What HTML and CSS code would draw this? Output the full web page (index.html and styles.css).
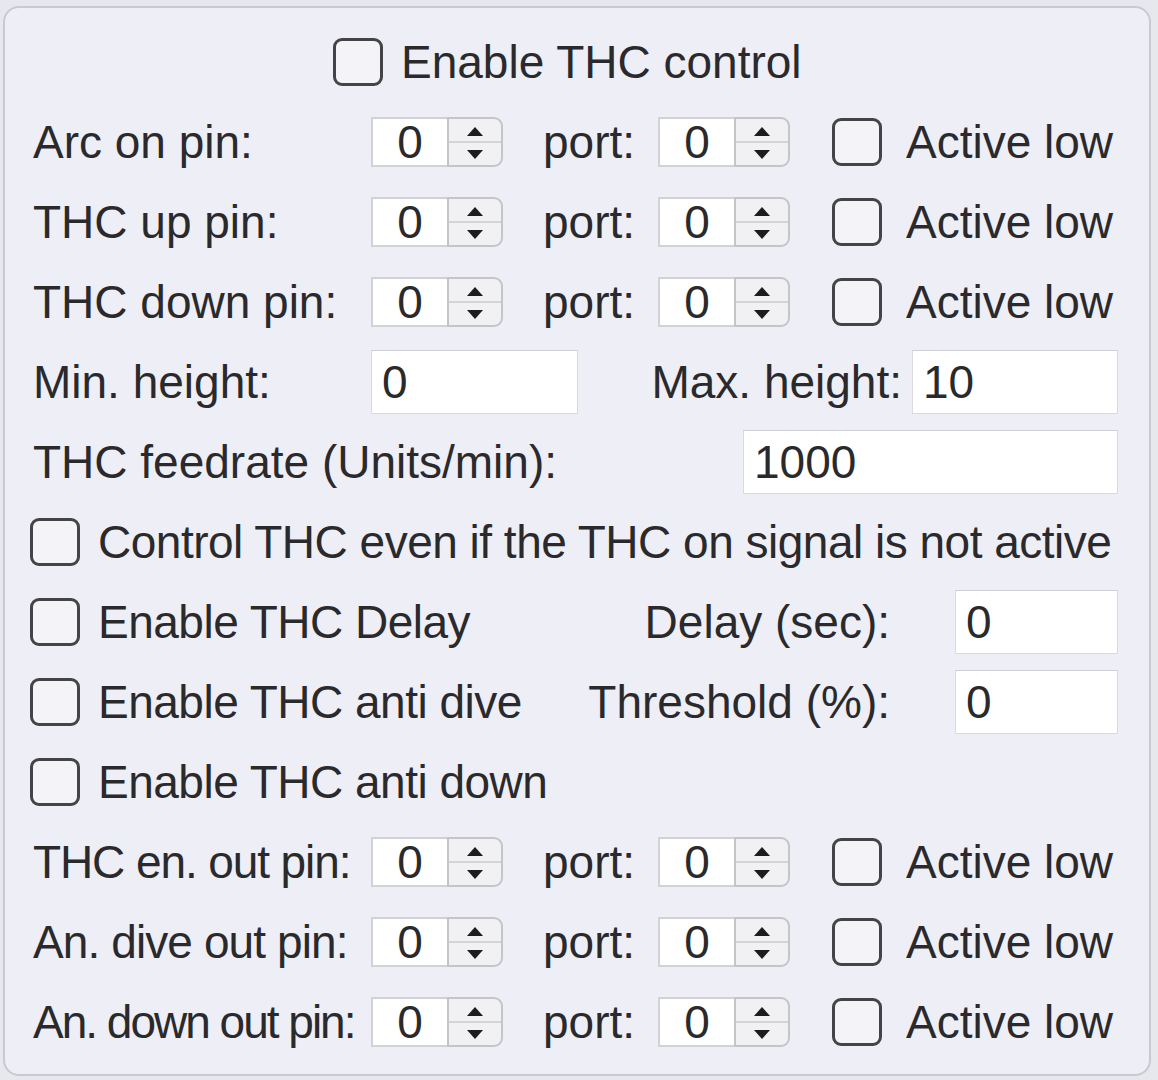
FILE: index.html
```
<!DOCTYPE html>
<html>
<head>
<meta charset="utf-8">
<link rel="stylesheet" href="styles.css">
</head>
<body>
<div class="frame">
  <div class="row top">
    <label class="check gap-top"><span class="box"></span><span>Enable THC control</span></label>
  </div>

  <div class="row pinrow">
    <span class="lbl">Arc on pin:</span>
    <div class="spin"><span class="spin-val">0</span><span class="spin-btns"><span class="half"><i class="up"></i></span><span class="half"><i class="down"></i></span></span></div>
    <span class="port">port:</span>
    <div class="spin"><span class="spin-val">0</span><span class="spin-btns"><span class="half"><i class="up"></i></span><span class="half"><i class="down"></i></span></span></div>
    <label class="check active"><span class="box"></span><span>Active low</span></label>
  </div>

  <div class="row pinrow">
    <span class="lbl">THC up pin:</span>
    <div class="spin"><span class="spin-val">0</span><span class="spin-btns"><span class="half"><i class="up"></i></span><span class="half"><i class="down"></i></span></span></div>
    <span class="port">port:</span>
    <div class="spin"><span class="spin-val">0</span><span class="spin-btns"><span class="half"><i class="up"></i></span><span class="half"><i class="down"></i></span></span></div>
    <label class="check active"><span class="box"></span><span>Active low</span></label>
  </div>

  <div class="row pinrow">
    <span class="lbl">THC down pin:</span>
    <div class="spin"><span class="spin-val">0</span><span class="spin-btns"><span class="half"><i class="up"></i></span><span class="half"><i class="down"></i></span></span></div>
    <span class="port">port:</span>
    <div class="spin"><span class="spin-val">0</span><span class="spin-btns"><span class="half"><i class="up"></i></span><span class="half"><i class="down"></i></span></span></div>
    <label class="check active"><span class="box"></span><span>Active low</span></label>
  </div>

  <div class="row heightrow">
    <span class="lbl">Min. height:</span>
    <span class="field">0</span>
    <span class="rlbl">Max. height:</span>
    <span class="field">10</span>
  </div>

  <div class="row feedrow">
    <span class="lbl">THC feedrate (Units/min):</span>
    <span class="field">1000</span>
  </div>

  <div class="row">
    <label class="check gap-l"><span class="box"></span><span class="ctext">Control THC even if the THC on signal is not active</span></label>
  </div>

  <div class="row delayrow">
    <label class="check gap-l"><span class="box"></span><span class="ctext">Enable THC Delay</span></label>
    <span class="rlbl">Delay (sec):</span>
    <span class="field">0</span>
  </div>

  <div class="row delayrow">
    <label class="check gap-l"><span class="box"></span><span class="ctext">Enable THC anti dive</span></label>
    <span class="rlbl">Threshold (%):</span>
    <span class="field">0</span>
  </div>

  <div class="row">
    <label class="check gap-l"><span class="box"></span><span class="ctext">Enable THC anti down</span></label>
  </div>

  <div class="row pinrow">
    <span class="lbl sq1">THC en. out pin:</span>
    <div class="spin"><span class="spin-val">0</span><span class="spin-btns"><span class="half"><i class="up"></i></span><span class="half"><i class="down"></i></span></span></div>
    <span class="port">port:</span>
    <div class="spin"><span class="spin-val">0</span><span class="spin-btns"><span class="half"><i class="up"></i></span><span class="half"><i class="down"></i></span></span></div>
    <label class="check active"><span class="box"></span><span>Active low</span></label>
  </div>

  <div class="row pinrow">
    <span class="lbl sq2">An. dive out pin:</span>
    <div class="spin"><span class="spin-val">0</span><span class="spin-btns"><span class="half"><i class="up"></i></span><span class="half"><i class="down"></i></span></span></div>
    <span class="port">port:</span>
    <div class="spin"><span class="spin-val">0</span><span class="spin-btns"><span class="half"><i class="up"></i></span><span class="half"><i class="down"></i></span></span></div>
    <label class="check active"><span class="box"></span><span>Active low</span></label>
  </div>

  <div class="row pinrow">
    <span class="lbl sq3">An. down out pin:</span>
    <div class="spin"><span class="spin-val">0</span><span class="spin-btns"><span class="half"><i class="up"></i></span><span class="half"><i class="down"></i></span></span></div>
    <span class="port">port:</span>
    <div class="spin"><span class="spin-val">0</span><span class="spin-btns"><span class="half"><i class="up"></i></span><span class="half"><i class="down"></i></span></span></div>
    <label class="check active"><span class="box"></span><span>Active low</span></label>
  </div>
</div>
</body>
</html>
```

FILE: styles.css
```
html, body {
  margin: 0;
  padding: 0;
  background: #e7e7ee;
}

body {
  font-family: "Liberation Sans", Arial, Helvetica, sans-serif;
  font-size: 46px;
  color: #2a2a2c;
  overflow: hidden;
}

.frame {
  box-sizing: border-box;
  margin: 6px 0 0 3px;
  width: 1148px;
  height: 1070px;
  border: 2px solid #c9c9cf;
  border-radius: 16px;
  background: #eeeef6;
  padding: 14px 31px 0 25px;
}

.row {
  height: 80px;
  display: flex;
  align-items: center;
  white-space: nowrap;
}

.row.top {
  padding-left: 303px;
}

.check {
  display: flex;
  align-items: center;
}

.gap-top { gap: 18px; }
.gap-l { gap: 18px; }
.ctext { letter-spacing: -0.5px; }
.active { gap: 24px; margin-left: 42px; }

.box {
  box-sizing: border-box;
  width: 50px;
  height: 48px;
  border: 3px solid #444448;
  border-radius: 9px;
  background: #f3f3f8;
  flex: none;
}

.pinrow {
  display: grid;
  grid-template-columns: 341px 132px 155px 132px auto;
  align-items: center;
}

.lbl { padding-left: 3px; }
.sq1 { letter-spacing: -1.1px; }
.sq2 { letter-spacing: -0.9px; }
.sq3 { letter-spacing: -2px; }

.port { padding-left: 40px; }

.spin {
  display: flex;
  height: 50px;
  width: 132px;
}

.spin-val {
  box-sizing: border-box;
  width: 76px;
  height: 50px;
  background: #ffffff;
  border: 2px solid #d2d2d6;
  border-right: none;
  display: flex;
  align-items: center;
  justify-content: center;
  line-height: 1;
}

.spin-btns {
  box-sizing: border-box;
  width: 56px;
  height: 50px;
  border: 2px solid #c4c4c9;
  border-radius: 0 9px 9px 0;
  background: #f1f1f4;
  display: flex;
  flex-direction: column;
}

.half {
  flex: 1;
  display: flex;
  align-items: center;
  justify-content: center;
}

.half:first-child {
  border-bottom: 2px solid #d4d4d8;
}

.up {
  width: 0;
  height: 0;
  border-left: 8px solid transparent;
  border-right: 8px solid transparent;
  border-bottom: 9px solid #1c1c1c;
  margin-top: 2px;
}

.down {
  width: 0;
  height: 0;
  border-left: 8px solid transparent;
  border-right: 8px solid transparent;
  border-top: 9px solid #1c1c1c;
}

.field {
  box-sizing: border-box;
  height: 64px;
  background: #ffffff;
  border: 1px solid #dadade;
  border-top-color: #cfcfd3;
  display: flex;
  align-items: center;
  padding-left: 10px;
  line-height: 1;
}

.heightrow {
  display: grid;
  grid-template-columns: 341px 207px 1fr 206px;
  align-items: center;
}

.rlbl { text-align: right; padding-right: 10px; }

.feedrow {
  display: grid;
  grid-template-columns: 1fr 375px;
  align-items: center;
}

.delayrow {
  display: grid;
  grid-template-columns: 1fr auto 163px;
  align-items: center;
}

.delayrow .rlbl { padding-right: 65px; }
```
